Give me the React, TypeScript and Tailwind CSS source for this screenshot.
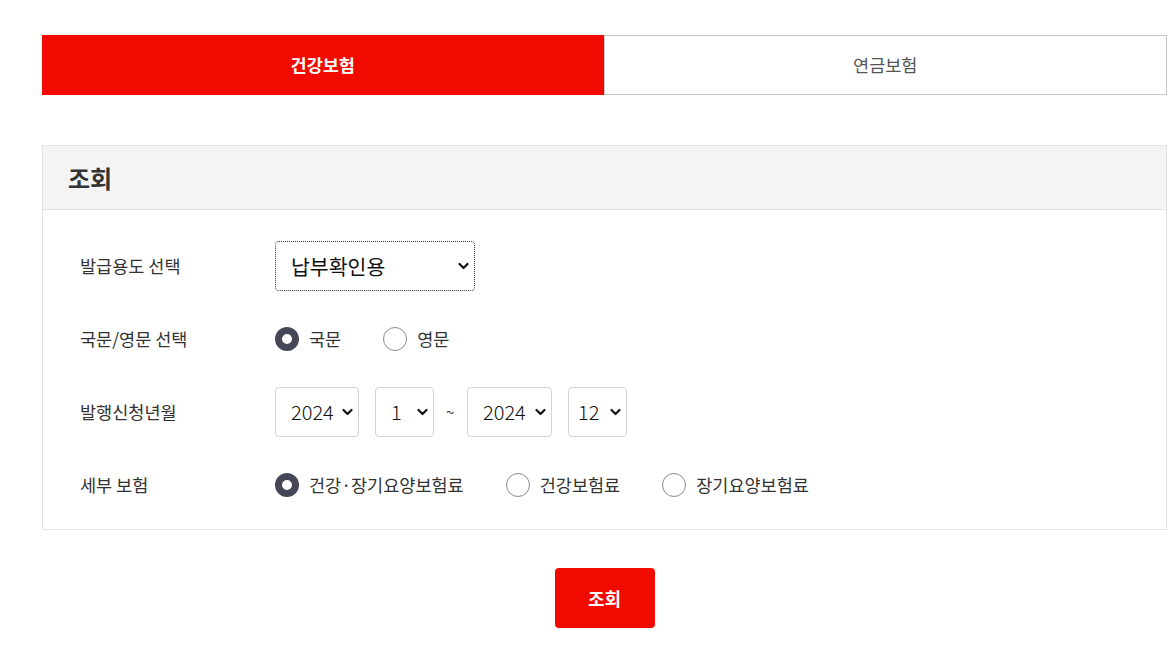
import { useState } from "react";

const FONT = { fontFamily: '"Noto Sans CJK KR", "Noto Sans", sans-serif' };

function Chevron() {
  return (
    <svg width="11" height="8" viewBox="0 0 11 8" className="pointer-events-none absolute right-[6px] top-1/2 -translate-y-1/2">
      <path d="M1.5 2 L5.5 6 L9.5 2" fill="none" stroke="#111" strokeWidth="2.2" strokeLinecap="round" strokeLinejoin="round" />
    </svg>
  );
}

/** 커스텀 셀렉트 박스 */
function SelectBox({
  value,
  options,
  width,
  focused,
  size = "text-[20px] font-light",
  pl = "pl-[15px]",
}: {
  value: string;
  options: string[];
  width: string;
  focused?: boolean;
  size?: string;
  pl?: string;
}) {
  const [v, setV] = useState(value);
  return (
    <div className={`relative h-[50px] ${width}`}>
      <select
        value={v}
        onChange={(e) => setV(e.target.value)}
        className={`h-full w-full appearance-none rounded-[4px] bg-white ${pl} ${size} text-[#111] outline-none ${
          focused ? "border-[1.5px] border-dotted border-[#333]" : "border border-[#d4d4d4]"
        }`}
      >
        {options.map((o) => (
          <option key={o}>{o}</option>
        ))}
      </select>
      <Chevron />
    </div>
  );
}

function Radio({ label, checked, onClick }: { label: string; checked: boolean; onClick: () => void }) {
  return (
    <button type="button" onClick={onClick} className="flex items-center gap-[10px]">
      {checked ? (
        <span className="box-border h-[24px] w-[24px] rounded-full border-[7px] border-[#464659] bg-white" />
      ) : (
        <span className="box-border h-[24px] w-[24px] rounded-full border border-[#8a8a8a] bg-white" />
      )}
      <span className="text-[17.5px] leading-6 text-[#333]">{label}</span>
    </button>
  );
}

function Row({ label, children }: { label: string; children: React.ReactNode }) {
  return (
    <div className="flex items-center">
      <div className="w-[195px] text-[17.5px] leading-6 text-[#333]">{label}</div>
      {children}
    </div>
  );
}

export default function App() {
  const [tab, setTab] = useState(0);
  const [lang, setLang] = useState(0);
  const [kind, setKind] = useState(0);
  const years = ["2024", "2023", "2022"];
  const months = Array.from({ length: 12 }, (_, i) => String(i + 1));

  return (
    <div className="min-h-[661px] bg-white pt-[35px]" style={FONT}>
      <div className="ml-[42px] w-[1125px]">
        {/* 탭 */}
        <div className="flex h-[60px]">
          {["건강보험", "연금보험"].map((t, i) => (
            <button
              key={t}
              onClick={() => setTab(i)}
              className={`flex-1 text-[17.5px] ${
                tab === i ? "bg-[#f00a00] font-bold text-white" : "border border-[#c5c5cd] bg-white text-[#555]"
              }`}
            >
              {t}
            </button>
          ))}
        </div>

        {/* 조회 패널 */}
        <div className="mt-[50px] border border-[#e2e2e2]">
          <div className="flex h-[64px] items-center border-b border-[#e2e2e2] bg-[#f4f4f4] px-[25px]">
            <h2 className="text-[24px] font-bold text-[#333]">조회</h2>
          </div>
          <div className="flex flex-col gap-[36px] px-[37px] pb-[32px] pt-[31px]">
            <Row label="발급용도 선택">
              <SelectBox value="납부확인용" options={["납부확인용", "제출용"]} width="w-[200px]" size="text-[20.5px]" focused />
            </Row>
            <Row label="국문/영문 선택">
              <div className="flex items-center gap-[42px]">
                <Radio label="국문" checked={lang === 0} onClick={() => setLang(0)} />
                <Radio label="영문" checked={lang === 1} onClick={() => setLang(1)} />
              </div>
            </Row>
            <Row label="발행신청년월">
              <div className="flex items-center gap-[16px]">
                <SelectBox value="2024" options={years} width="w-[84px]" />
                <SelectBox value="1" options={months} width="w-[59px]" />
                <span className="-mx-[4px] w-[9px] text-[15px] text-[#333]">~</span>
                <SelectBox value="2024" options={years} width="w-[85px]" />
                <SelectBox value="12" options={months} width="w-[59px]" pl="pl-[9px]" />
              </div>
            </Row>
            <Row label="세부 보험">
              <div className="flex items-center gap-[42px]">
                <Radio label="건강·장기요양보험료" checked={kind === 0} onClick={() => setKind(0)} />
                <Radio label="건강보험료" checked={kind === 1} onClick={() => setKind(1)} />
                <Radio label="장기요양보험료" checked={kind === 2} onClick={() => setKind(2)} />
              </div>
            </Row>
          </div>
        </div>

        <div className="mt-[38px] flex justify-center">
          <button className="h-[60px] w-[100px] rounded-[4px] bg-[#f00a00] text-[18px] font-bold text-white">조회</button>
        </div>
      </div>
    </div>
  );
}
